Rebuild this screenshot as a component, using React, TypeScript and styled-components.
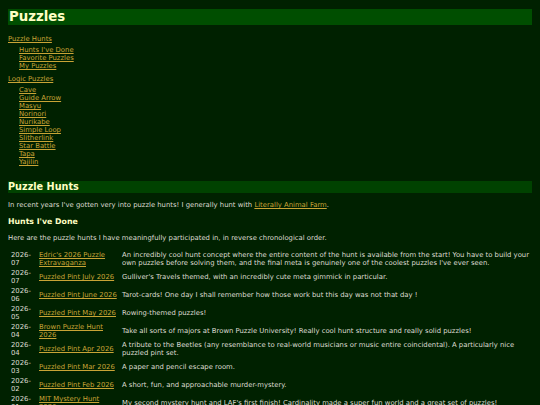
import React from 'react';
import styled, { createGlobalStyle } from 'styled-components';

const GlobalStyle = createGlobalStyle`
  html, body {
    margin: 0;
    padding: 0;
    background: #002100;
  }
  body {
    font-family: "DejaVu Sans", Verdana, sans-serif;
    font-size: 6.85px;
    line-height: 8px;
    color: #dedcd2;
  }
`;

const Page = styled.div`
  padding: 9px 8px 0;
`;

const Title = styled.h1`
  margin: 0;
  height: 16px;
  line-height: 16px;
  padding-left: 1px;
  font-size: 13.3px;
  font-weight: bold;
  color: #ffffc4;
  background: #004e00;
`;

const Link = styled.a`
  color: #c9a436;
  text-decoration: underline;
`;

const Nav = styled.ul`
  list-style: none;
  margin: 10px 0 0;
  padding: 0;
  display: flex;
  flex-direction: column;
  gap: 5px;
`;

const NavGroup = styled.li`
  margin: 0;
`;

const SubList = styled.ul`
  list-style: none;
  margin: 3px 0 0;
  padding: 0 0 0 11px;
`;

const SectionTitle = styled.h2`
  margin: 15px 0 0;
  height: 12px;
  line-height: 12px;
  font-size: 9.7px;
  font-weight: bold;
  color: #ffffc4;
  background: #004200;
`;

const Para = styled.p<{ $top: number }>`
  margin: ${(p) => p.$top}px 0 0;
`;

const SubTitle = styled.h3`
  margin: 8px 0 0;
  line-height: 10px;
  font-size: 7.8px;
  font-weight: bold;
  color: #ffffc4;
`;

const HuntTable = styled.table`
  margin-top: 7px;
  width: 100%;
  border-spacing: 2px;
`;

const Cell = styled.td<{ $w?: number }>`
  padding: 0 1px;
  vertical-align: middle;
  ${(p) => (p.$w ? `width: ${p.$w}px;` : '')}
`;

type Hunt = { date: string; name: string; note: string };

const hunts: Hunt[] = [
  {
    date: '2026-07',
    name: "Edric's 2026 Puzzle Extravaganza",
    note: "An incredibly cool hunt concept where the entire content of the hunt is available from the start! You have to build your own puzzles before solving them, and the final meta is genuinely one of the coolest puzzles I've ever seen.",
  },
  {
    date: '2026-07',
    name: 'Puzzled Pint July 2026',
    note: "Gulliver's Travels themed, with an incredibly cute meta gimmick in particular.",
  },
  {
    date: '2026-06',
    name: 'Puzzled Pint June 2026',
    note: 'Tarot-cards! One day I shall remember how those work but this day was not that day !',
  },
  { date: '2026-05', name: 'Puzzled Pint May 2026', note: 'Rowing-themed puzzles!' },
  {
    date: '2026-04',
    name: 'Brown Puzzle Hunt 2026',
    note: 'Take all sorts of majors at Brown Puzzle University! Really cool hunt structure and really solid puzzles!',
  },
  {
    date: '2026-04',
    name: 'Puzzled Pint Apr 2026',
    note: 'A tribute to the Beetles (any resemblance to real-world musicians or music entire coincidental). A particularly nice puzzled pint set.',
  },
  { date: '2026-03', name: 'Puzzled Pint Mar 2026', note: 'A paper and pencil escape room.' },
  { date: '2026-02', name: 'Puzzled Pint Feb 2026', note: 'A short, fun, and approachable murder-mystery.' },
  {
    date: '2026-01',
    name: 'MIT Mystery Hunt 2026',
    note: "My second mystery hunt and LAF's first finish! Cardinality made a super fun world and a great set of puzzles!",
  },
];

const huntLinks = ["Hunts I've Done", 'Favorite Puzzles', 'My Puzzles'];
const logicLinks = [
  'Cave',
  'Guide Arrow',
  'Masyu',
  'Norinori',
  'Nurikabe',
  'Simple Loop',
  'Slitherlink',
  'Star Battle',
  'Tapa',
  'Yajilin',
];

const App: React.FC = () => {
  return (
    <>
      <GlobalStyle />
      <Page>
        <Title>Puzzles</Title>
        <Nav>
          <NavGroup>
            <Link href="#hunts">Puzzle Hunts</Link>
            <SubList>
              {huntLinks.map((l) => (
                <li key={l}>
                  <Link href="#">{l}</Link>
                </li>
              ))}
            </SubList>
          </NavGroup>
          <NavGroup>
            <Link href="#logic">Logic Puzzles</Link>
            <SubList>
              {logicLinks.map((l) => (
                <li key={l}>
                  <Link href="#">{l}</Link>
                </li>
              ))}
            </SubList>
          </NavGroup>
        </Nav>

        <SectionTitle id="hunts">Puzzle Hunts</SectionTitle>
        <Para $top={8}>
          In recent years I've gotten very into puzzle hunts! I generally hunt with{' '}
          <Link href="#">Literally Animal Farm</Link>.
        </Para>
        <SubTitle>Hunts I've Done</SubTitle>
        <Para $top={7}>
          Here are the puzzle hunts I have meaningfully participated in, in reverse chronological order.
        </Para>
        <HuntTable>
          <tbody>
            {hunts.map((h, i) => (
              <tr key={i}>
                <Cell $w={24}>{h.date}</Cell>
                <Cell $w={79}>
                  <Link href="#">{h.name}</Link>
                </Cell>
                <Cell>{h.note}</Cell>
              </tr>
            ))}
          </tbody>
        </HuntTable>
      </Page>
    </>
  );
};

export default App;
